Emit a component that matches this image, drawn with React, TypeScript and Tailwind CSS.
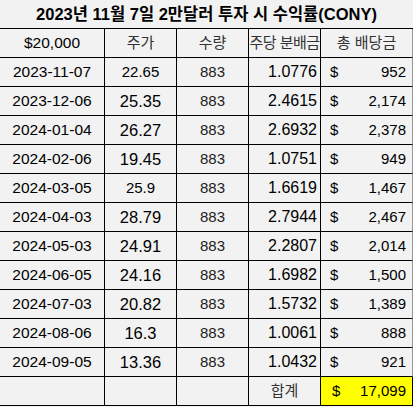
const rows = [
  { date: "2023-11-07", price: "22.65", big: false, div: "1.0776", total: "952" },
  { date: "2023-12-06", price: "25.35", big: true, div: "2.4615", total: "2,174" },
  { date: "2024-01-04", price: "26.27", big: true, div: "2.6932", total: "2,378" },
  { date: "2024-02-06", price: "19.45", big: true, div: "1.0751", total: "949" },
  { date: "2024-03-05", price: "25.9", big: false, div: "1.6619", total: "1,467" },
  { date: "2024-04-03", price: "28.79", big: true, div: "2.7944", total: "2,467" },
  { date: "2024-05-03", price: "24.91", big: true, div: "2.2807", total: "2,014" },
  { date: "2024-06-05", price: "24.16", big: true, div: "1.6982", total: "1,500" },
  { date: "2024-07-03", price: "20.82", big: true, div: "1.5732", total: "1,389" },
  { date: "2024-08-06", price: "16.3", big: true, div: "1.0061", total: "888" },
  { date: "2024-09-05", price: "13.36", big: true, div: "1.0432", total: "921" },
];

const font = {
  fontFamily: '"Liberation Sans", "Noto Sans CJK KR", sans-serif',
};
const cell = "h-[29px] border-b border-r border-black flex items-center";
const grid = "grid grid-cols-[105px_72px_72px_72px_92px]";

export default function App() {
  return (
    <div className="w-[413px] h-[407px] bg-[#f2f2f2] text-black" style={font}>
      <div className="h-[29px] border-b border-black flex items-center justify-center text-[16.5px] font-bold">
        2023년 11월 7일 2만달러 투자 시 수익률(CONY)
      </div>
      <div className={`${grid} text-[15px]`}>
        <div className={`${cell} justify-center text-[15.5px]`}>$20,000</div>
        <div className={`${cell} justify-center text-[#333]`}>주가</div>
        <div className={`${cell} justify-center text-[#333]`}>수량</div>
        <div className={`${cell} justify-center text-[#333] tracking-[-0.5px]`}>주당 분배금</div>
        <div className={`${cell} justify-center text-[#333] border-r-[#999]`}>총 배당금</div>
      </div>
      {rows.map((r) => (
        <div key={r.date} className={`${grid} text-[15px]`}>
          <div className={`${cell} justify-center text-[15.5px]`}>{r.date}</div>
          <div className={`${cell} justify-center ${r.big ? "text-[16.5px]" : ""}`}>{r.price}</div>
          <div className={`${cell} justify-center text-[#222]`}>883</div>
          <div className={`${cell} justify-end pr-[3px] text-[16px]`}>{r.div}</div>
          <div className={`${cell} justify-between pl-[9px] pr-[6px] border-r-[#999]`}>
            <span>$</span>
            <span>{r.total}</span>
          </div>
        </div>
      ))}
      <div className={`${grid} text-[15px]`}>
        <div className={cell} />
        <div className={cell} />
        <div className={cell} />
        <div className={`${cell} justify-center text-[#333]`}>합계</div>
        <div className={`${cell} justify-between pl-[11px] pr-[6px] bg-[#ffff00] border-black`}>
          <span>$</span>
          <span>17,099</span>
        </div>
      </div>
    </div>
  );
}
